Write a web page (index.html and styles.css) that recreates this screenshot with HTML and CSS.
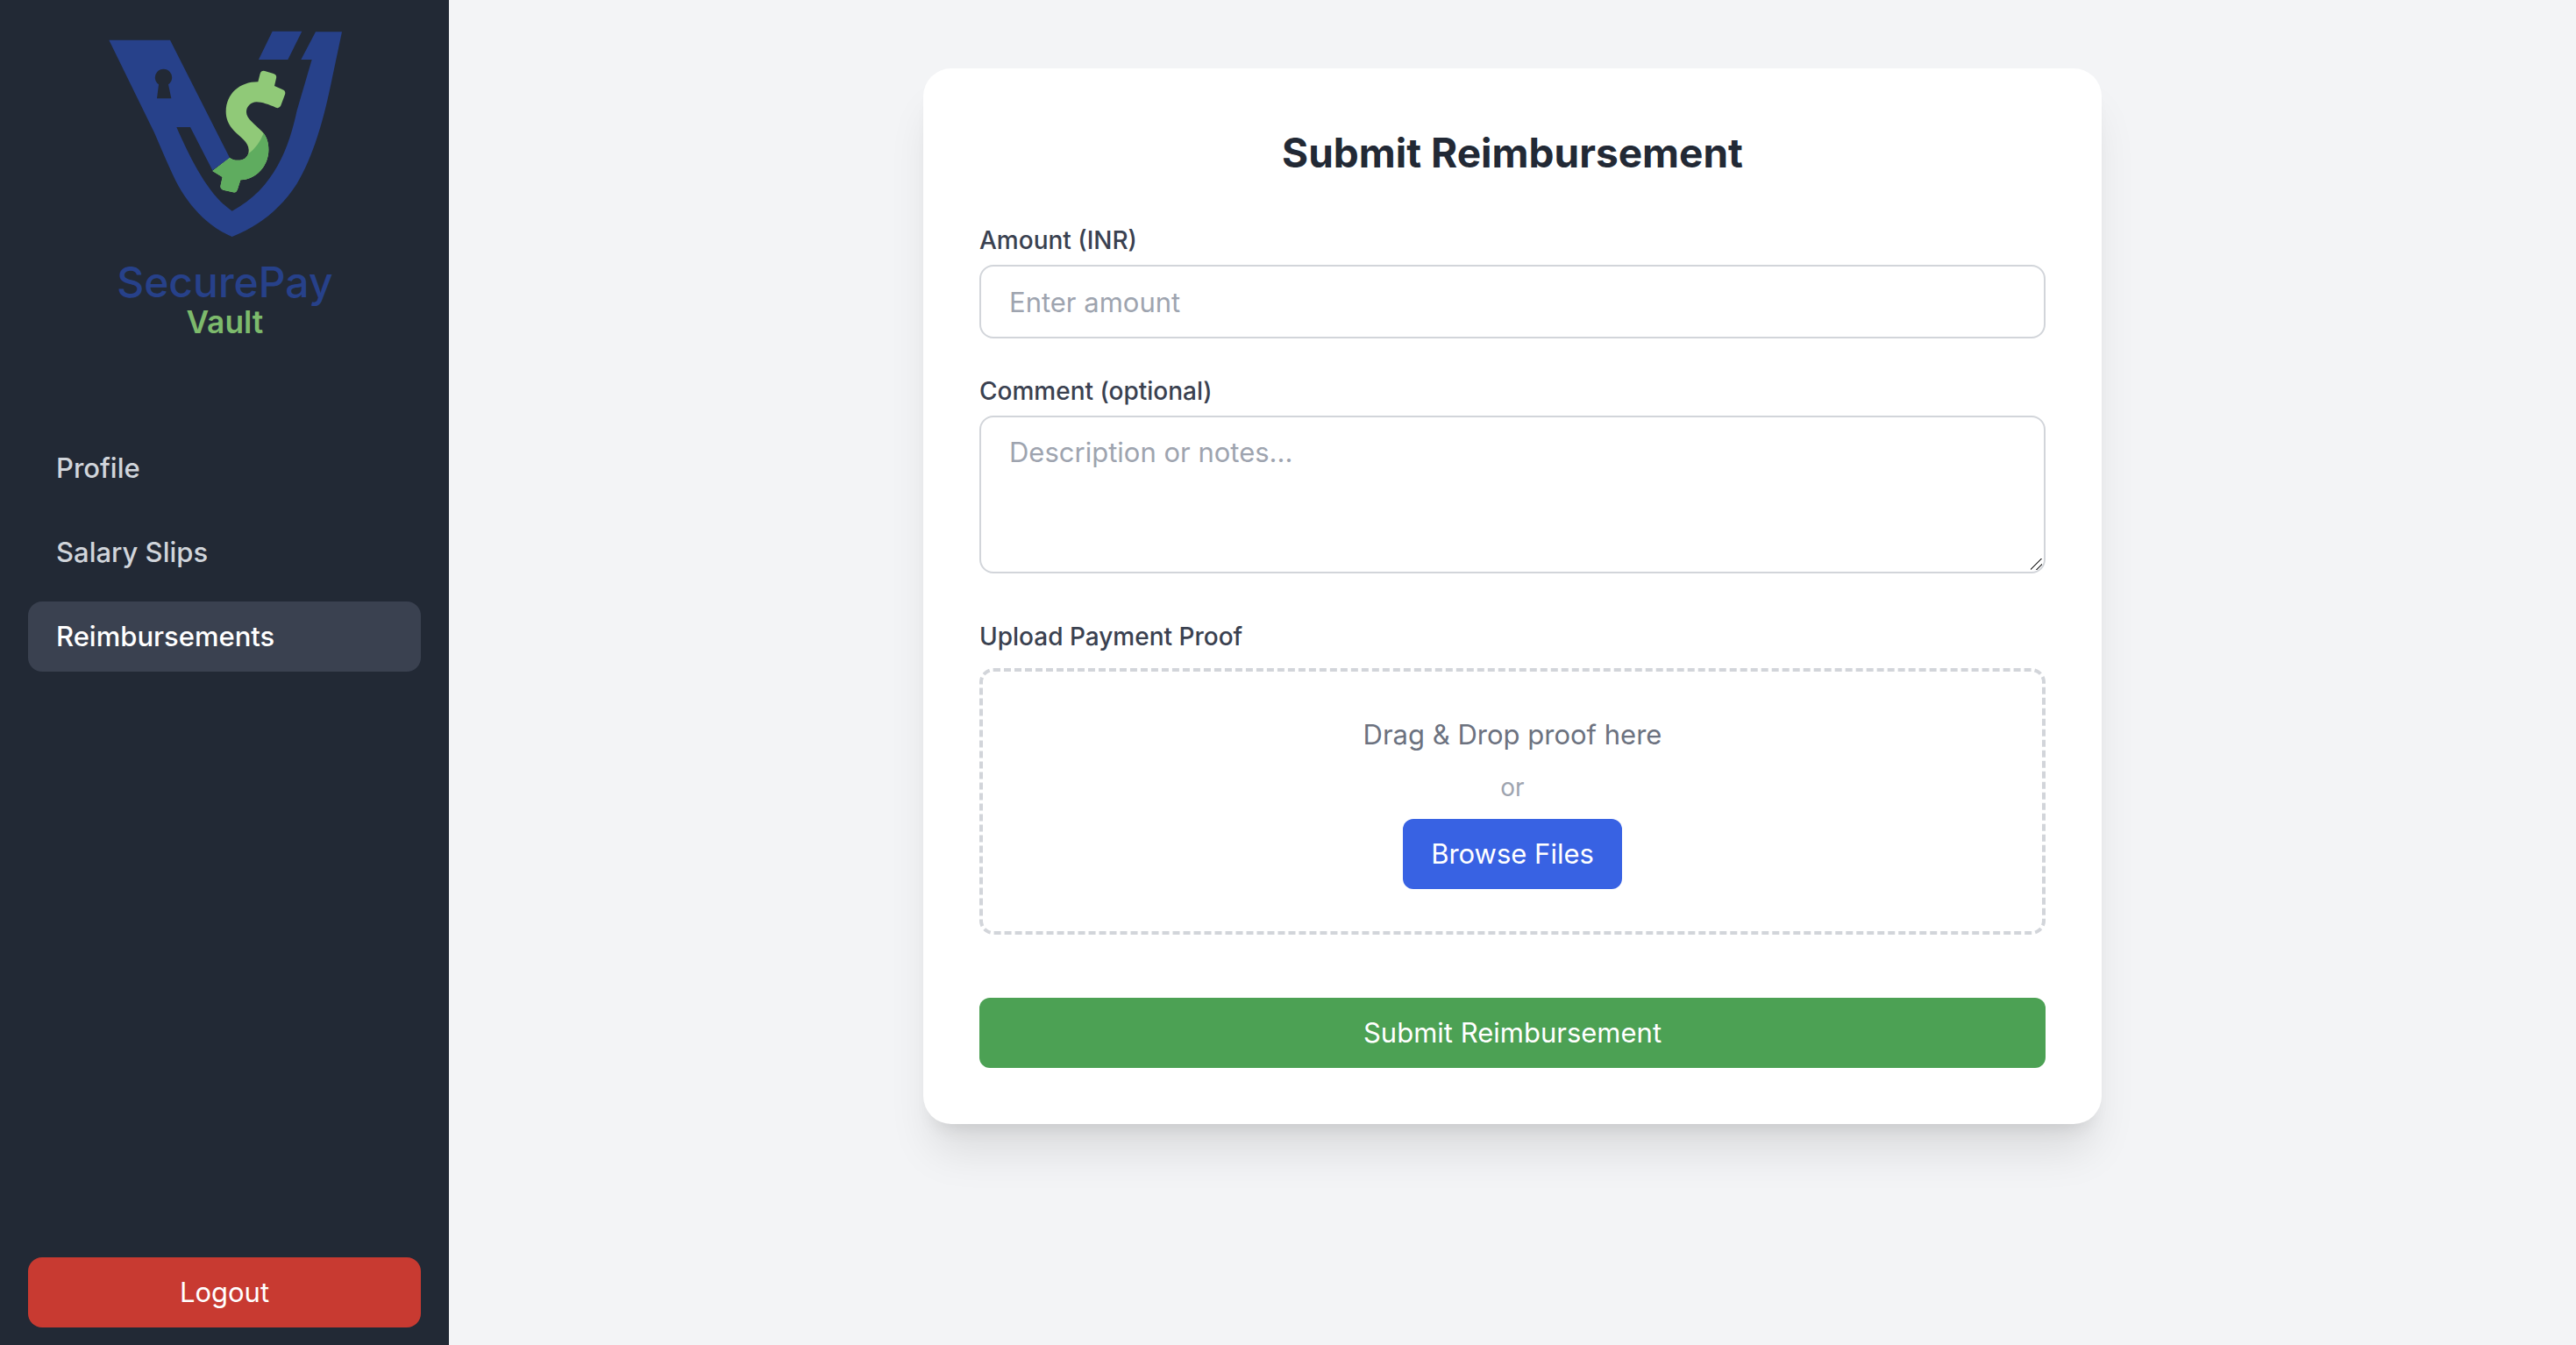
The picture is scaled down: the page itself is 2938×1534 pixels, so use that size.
FILE: index.html
```html
<!DOCTYPE html>
<html lang="en">
<head>
<meta charset="utf-8">
<meta name="viewport" content="width=device-width, initial-scale=1">
<title>Submit Reimbursement</title>
<link rel="stylesheet" href="styles.css">
</head>
<body>
<div class="app">
  <aside class="sidebar">
    <svg class="logo" viewBox="0 0 936 1170" role="img" aria-label="SecurePay Vault">
      <defs>
        <clipPath id="dollar-shade">
          <path d="M400 540L486 480Q520 492 550 466Q585 440 602 396L660 380V620H400Z"/>
        </clipPath>
        <path id="dollar" d="M583 220L590 192Q594 180 606 183L636 192Q648 196 645 208L639 234L666 246Q679 251 675 263L661 301Q656 313 644 308C620 298 596 289 578 289C558 290 543 304 543 324C543 346 574 367 596 389C614 407 619 430 619 452C619 508 577 553 523 556L512 590Q508 600 498 598L464 590Q452 586 455 574L461 546L427 525L486 480C496 488 508 489 521 488C541 486 552 471 551 452C550 426 523 411 501 388C481 367 473 345 473 322C474 260 520 220 583 220Z"/>
      </defs>
      <g class="logo-blue">
        <path fill-rule="evenodd" d="M73 77H282L486 480L427 523L351 375H304C352 485 415 610 494 662C640 585 690 440 716 318L767 144H730L780 49H870L838 200C808 350 772 475 715 570C660 655 585 714 494 750C425 722 365 665 321 594C295 552 265 480 228 394ZM243 229L237 277H286L276 229A29 29 0 1 0 243 229Z"/>
        <path d="M632 47H733L685 144H585Z"/>
      </g>
      <use class="logo-light" href="#dollar"/>
      <use class="logo-dark" href="#dollar" clip-path="url(#dollar-shade)"/>
      <text class="logo-name" x="469" y="957">SecurePay</text>
      <text class="logo-sub" x="469" y="1081">Vault</text>
    </svg>
    <nav class="nav">
      <a class="nav-link" href="#profile">Profile</a>
      <a class="nav-link" href="#salary-slips">Salary Slips</a>
      <a class="nav-link active" href="#reimbursements" aria-current="page">Reimbursements</a>
    </nav>
    <button class="button logout" type="button">Logout</button>
  </aside>
  <main class="main">
    <form class="card">
      <h1 class="title">Submit Reimbursement</h1>
      <div class="field">
        <label class="label" for="amount">Amount (INR)</label>
        <input class="control" id="amount" type="text" inputmode="decimal" placeholder="Enter amount">
      </div>
      <div class="field comment">
        <label class="label" for="comment">Comment (optional)</label>
        <textarea class="control" id="comment" rows="3" placeholder="Description or notes..."></textarea>
      </div>
      <div class="field upload">
        <label class="label" for="browse">Upload Payment Proof</label>
        <div class="dropzone">
          <p class="drop-text">Drag &amp; Drop proof here</p>
          <p class="drop-or">or</p>
          <button class="button browse" id="browse" type="button">Browse Files</button>
        </div>
      </div>
      <button class="button submit" type="submit">Submit Reimbursement</button>
    </form>
  </main>
</div>
</body>
</html>
```
FILE: styles.css
```css
* {
  box-sizing: border-box;
}

body {
  margin: 0;
  background: #f3f4f6;
  color: #222935;
  font-family: Inter, "Liberation Sans", sans-serif;
  font-size: 31px;
  line-height: 48px;
}

.app {
  display: flex;
  min-height: 100vh;
}

/* Sidebar */
.sidebar {
  display: flex;
  flex-direction: column;
  flex: 0 0 512px;
  padding: 20px 32px;
  background: #222935;
}

.logo {
  width: 312px;
  align-self: center;
  margin-bottom: 84px;
}

.logo-blue,
.logo-name {
  fill: #27418a;
}

.logo-light {
  fill: #90c978;
}

.logo-dark {
  fill: #5fac5f;
}

.logo-name,
.logo-sub {
  font-family: Inter, sans-serif;
  text-anchor: middle;
}

.logo-name {
  font-size: 144px;
  font-weight: 500;
}

.logo-sub {
  fill: #7dba6c;
  font-size: 106px;
  font-weight: 600;
}

.nav {
  display: flex;
  flex-direction: column;
  gap: 16px;
}

.nav-link {
  padding: 16px 32px;
  border-radius: 16px;
  color: #d1d5db;
  font-weight: 500;
  text-decoration: none;
}

.nav-link.active {
  background: #3a4150;
  color: #fff;
}

.button {
  padding: 16px 32px;
  border: 0;
  border-radius: 12px;
  color: #fff;
  font: inherit;
  cursor: pointer;
}

.logout {
  margin-top: auto;
  border-radius: 16px;
  background: #c83a31;
}

/* Form */
.main {
  flex: 1;
  padding: 78px 48px;
}

.card {
  max-width: 1344px;
  margin: 0 auto;
  padding: 64px;
  border-radius: 32px;
  background: #fff;
  box-shadow: 0 40px 50px -10px rgba(0, 0, 0, 0.1), 0 16px 20px -12px rgba(0, 0, 0, 0.1);
}

.title {
  margin: 0 0 48px;
  font-size: 46px;
  font-weight: 700;
  line-height: 64px;
  text-align: center;
}

.field {
  display: flex;
  flex-direction: column;
  gap: 8px;
  margin-bottom: 40px;
}

.field.comment {
  margin-bottom: 52px;
}

.field.upload {
  gap: 16px;
  margin-bottom: 72px;
}

.label {
  color: #3a4150;
  font-size: 28px;
  font-weight: 500;
  line-height: 40px;
}

.control {
  display: block;
  width: 100%;
  padding: 16px 32px;
  border: 2px solid #d2d5da;
  border-radius: 16px;
  background: #fff;
  color: inherit;
  font: inherit;
}

input.control {
  height: 84px;
}

textarea.control {
  resize: vertical;
}

textarea.control::-webkit-resizer {
  background: linear-gradient(135deg, transparent 0 46%, #555 46% 53%, transparent 53% 73%, #555 73% 80%, transparent 80%) 0 0 / 13px 13px no-repeat;
}

.control::placeholder {
  color: #9ea4af;
  opacity: 1;
}

.dropzone {
  display: flex;
  flex-direction: column;
  align-items: center;
  gap: 16px;
  padding: 48px;
  border: 4px dashed #d2d5da;
  border-radius: 16px;
}

.drop-text,
.drop-or {
  margin: 0;
}

.drop-text {
  color: #6c727f;
}

.drop-or {
  color: #9ea4af;
  font-size: 28px;
  line-height: 40px;
}

.browse {
  background: #3862e3;
}

.submit {
  display: block;
  width: 100%;
  background: #4ca154;
}
```
